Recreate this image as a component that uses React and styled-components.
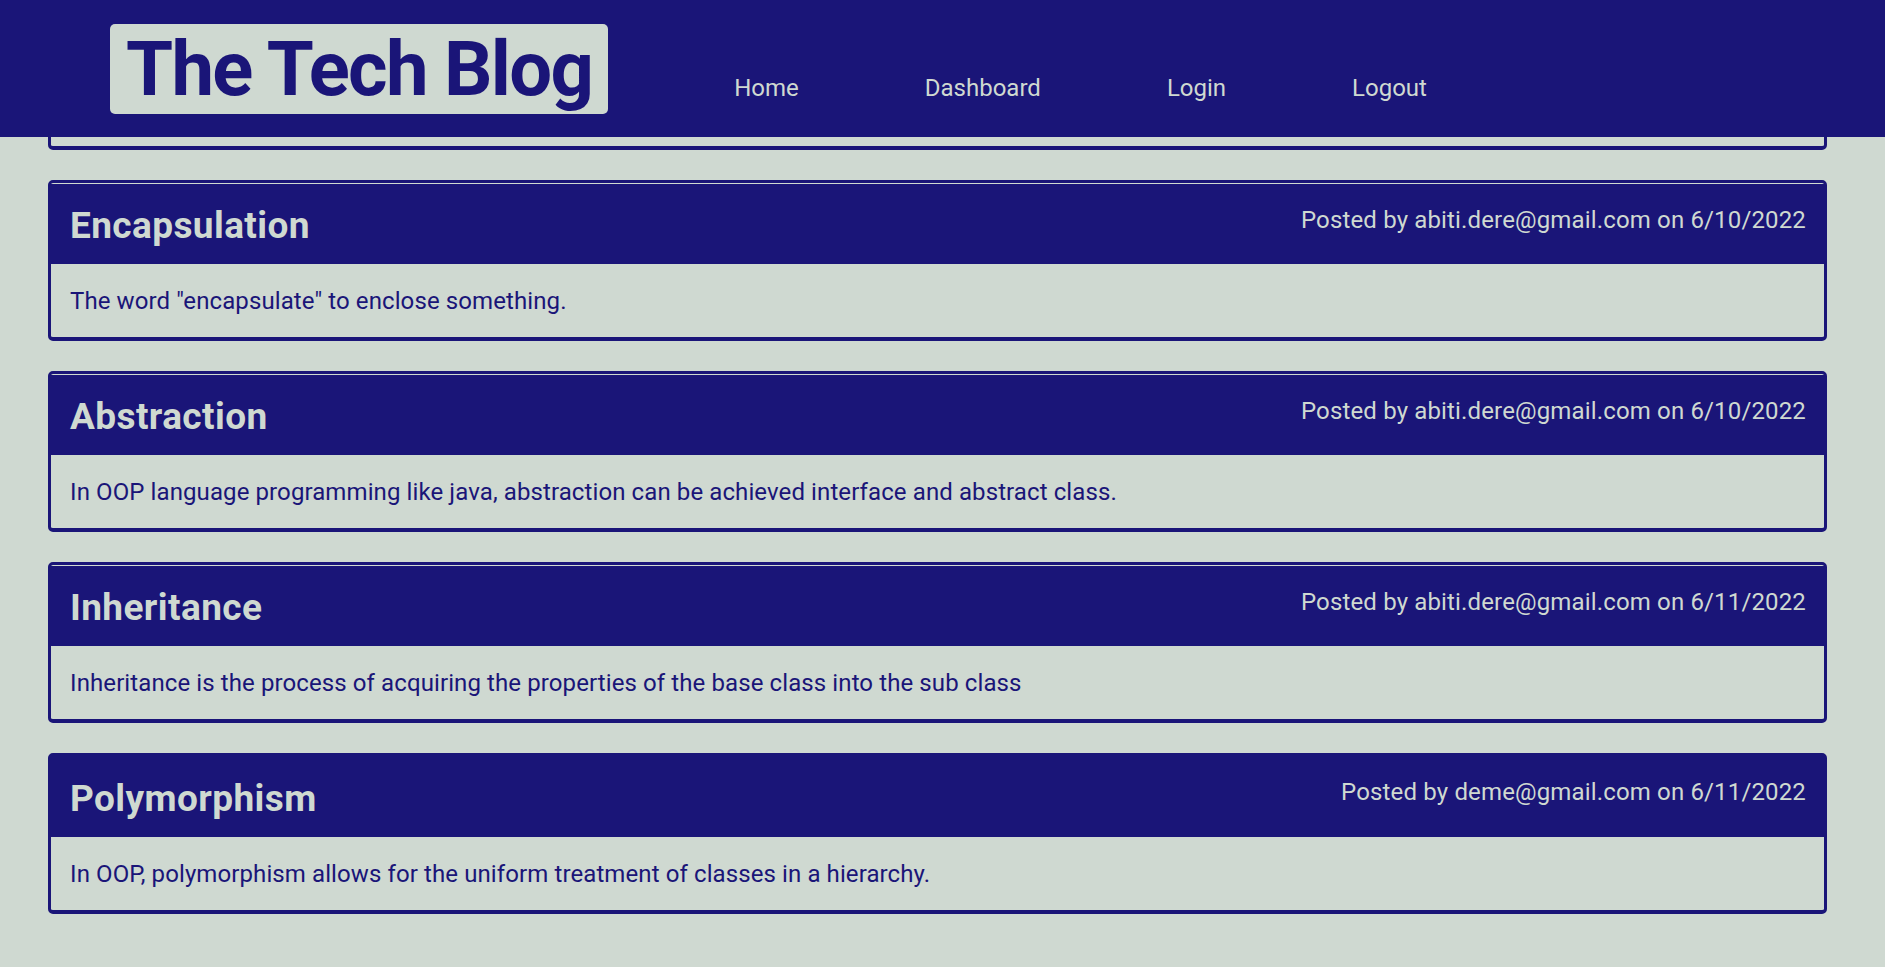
import React from "react";
import styled, { createGlobalStyle } from "styled-components";

const NAVY = "#1a1578";
const LIGHT = "#cfd9d1";

const GlobalStyle = createGlobalStyle`
  html, body {
    margin: 0;
    padding: 0;
    height: 100%;
    overflow: hidden;
    background: ${LIGHT};
  }
  body {
    font-family: Roboto, "Noto Sans", Arial, sans-serif;
  }
  #root {
    height: 100%;
  }
`;

const Page = styled.div`
  display: flex;
  flex-direction: column;
  height: 100vh;
  background: ${LIGHT};
`;

const Header = styled.header`
  flex: 0 0 137px;
  display: flex;
  align-items: center;
  gap: 126px;
  padding-left: 110px;
  background: ${NAVY};
  position: relative;
  z-index: 1;
`;

const Logo = styled.h1`
  margin: 0;
  height: 90px;
  box-sizing: border-box;
  padding: 0 16px;
  display: flex;
  align-items: center;
  background: ${LIGHT};
  border-radius: 5px;
  color: ${NAVY};
  font-family: Roboto, "Noto Sans", sans-serif;
  font-weight: 700;
  font-size: 76px;
  line-height: 1;
  letter-spacing: -1.7px;
`;

const Nav = styled.nav`
  display: flex;
  gap: 126px;
  padding-top: 38px;
`;

const NavLink = styled.a`
  color: ${LIGHT};
  text-decoration: none;
  font-size: 24px;
  line-height: 28px;
`;

const Main = styled.main`
  flex: 1;
  min-height: 0;
  overflow: hidden;
  display: flex;
  flex-direction: column;
  justify-content: flex-end;
  gap: 30px;
  padding: 0 58px 53px 48px;
`;

const Card = styled.article`
  flex: 0 0 auto;
  border: 3px solid ${NAVY};
  border-bottom-width: 4px;
  border-radius: 5px;
  background: ${LIGHT};
  padding-top: ${(p) => (p.$gap ? "1px" : "0")};
`;

const StubCard = styled(Card)`
  height: 155px;
`;

const CardHead = styled.div`
  height: ${(p) => (p.$gap ? "80px" : "81px")};
  display: flex;
  align-items: center;
  justify-content: space-between;
  padding: 0 18px 0 19px;
  background: ${NAVY};
  color: ${LIGHT};
`;

const Title = styled.h2`
  margin: 0;
  padding-top: 4px;
  font-size: 37px;
  font-weight: 700;
  line-height: 40px;
  letter-spacing: 0.4px;
`;

const Meta = styled.p`
  margin: 0 0 9px 0;
  font-size: 24px;
  line-height: 28px;
  letter-spacing: 0.15px;
`;

const CardBody = styled.div`
  height: 73px;
  display: flex;
  align-items: center;
  padding: 0 19px;
  color: ${NAVY};
  font-size: 24px;
  letter-spacing: 0.1px;
`;

const posts = [
  {
    title: "Encapsulation",
    author: "abiti.dere@gmail.com",
    date: "6/10/2022",
    body: 'The word "encapsulate" to enclose something.',
    gap: true,
  },
  {
    title: "Abstraction",
    author: "abiti.dere@gmail.com",
    date: "6/10/2022",
    body: "In OOP language programming like java, abstraction can be achieved interface and abstract class.",
    gap: true,
  },
  {
    title: "Inheritance",
    author: "abiti.dere@gmail.com",
    date: "6/11/2022",
    body: "Inheritance is the process of acquiring the properties of the base class into the sub class",
    gap: true,
  },
  {
    title: "Polymorphism",
    author: "deme@gmail.com",
    date: "6/11/2022",
    body: "In OOP, polymorphism allows for the uniform treatment of classes in a hierarchy.",
    gap: false,
  },
];

export default function App() {
  return (
    <>
      <GlobalStyle />
      <Page>
        <Header>
          <Logo>The Tech Blog</Logo>
          <Nav>
            <NavLink href="#">Home</NavLink>
            <NavLink href="#">Dashboard</NavLink>
            <NavLink href="#">Login</NavLink>
            <NavLink href="#">Logout</NavLink>
          </Nav>
        </Header>
        <Main>
          <StubCard $gap />
          {posts.map((p) => (
            <Card key={p.title} $gap={p.gap}>
              <CardHead $gap={p.gap}>
                <Title>{p.title}</Title>
                <Meta>
                  Posted by {p.author} on {p.date}
                </Meta>
              </CardHead>
              <CardBody>{p.body}</CardBody>
            </Card>
          ))}
        </Main>
      </Page>
    </>
  );
}
